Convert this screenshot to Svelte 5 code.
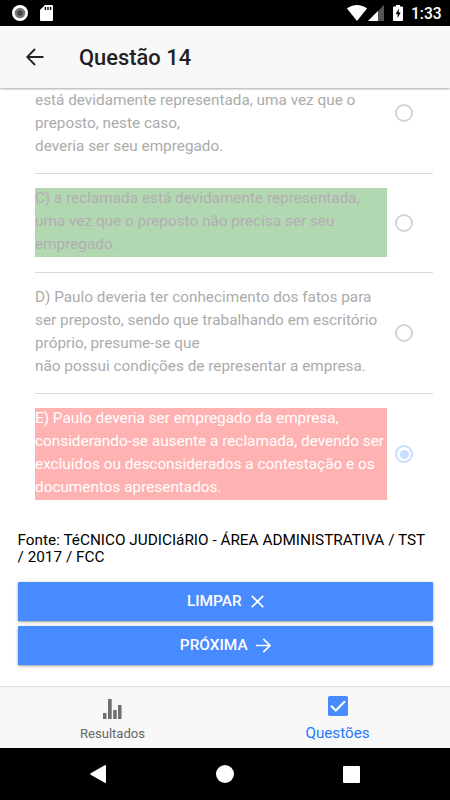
<script lang="ts">
	type Option = {
		text: string;
		state?: 'correct' | 'wrong';
		checked?: boolean;
	};

	const options: Option[] = [
		{
			text: 'está devidamente representada, uma vez que o\npreposto, neste caso,\ndeveria ser seu empregado.'
		},
		{
			text: 'C) a reclamada está devidamente representada,\numa vez que o preposto não precisa ser seu\nempregado.',
			state: 'correct'
		},
		{
			text: 'D) Paulo deveria ter conhecimento dos fatos para\nser preposto, sendo que trabalhando em escritório\npróprio, presume-se que\nnão possui condições de representar a empresa.'
		},
		{
			text: 'E) Paulo deveria ser empregado da empresa,\nconsiderando-se ausente a reclamada, devendo ser\nexcluídos ou desconsiderados a contestação e os\ndocumentos apresentados.',
			state: 'wrong',
			checked: true
		}
	];
</script>

<div class="screen">
	<div class="status">
		<svg class="record" width="16" height="16" viewBox="0 0 16 16">
			<circle cx="8" cy="8" r="8" fill="#fff" />
			<circle cx="8" cy="8" r="5.3" fill="#777" />
			<circle cx="8" cy="8" r="2.7" fill="#444" />
		</svg>
		<svg class="sd" width="13" height="16" viewBox="0 0 13 16">
			<path d="M5 0h7a1 1 0 0 1 1 1v14a1 1 0 0 1-1 1H1a1 1 0 0 1-1-1V5z" fill="#fff" />
			<path d="M4.7 2h1.4v3H4.7zM7.3 2h1.4v3H7.3zM9.900 2h1.4v3H9.900z" fill="#000" />
		</svg>
		<div class="spacer"></div>
		<svg class="wifi" width="20" height="16" viewBox="0 0 20 16">
			<path d="M10 16 0 3.5Q4.4 0 10 0t10 3.5z" fill="#fff" />
		</svg>
		<svg class="signal" width="16" height="16" viewBox="0 0 16 16">
			<path d="M16 0v16H0z" fill="#555" />
			<path d="M10 6v10H0z" fill="#fff" />
		</svg>
		<svg class="battery" width="10" height="16" viewBox="0 0 10 16">
			<path d="M3 0h4v1.5h2a1 1 0 0 1 1 1V15a1 1 0 0 1-1 1H1a1 1 0 0 1-1-1V2.5a1 1 0 0 1 1-1h2z" fill="#fff" />
			<path d="M6 3.500 2.600 9h2v4l3.100-5.500H5.700z" fill="#000" />
		</svg>
		<span class="clock">1:33</span>
	</div>

	<header>
		<svg class="back" width="18" height="18" viewBox="0 0 18 18">
			<path d="M17.5 9H1.5M9 1 1.2 9 9 17" fill="none" stroke="#222" stroke-width="1.8" />
		</svg>
		<h1>Questão 14</h1>
	</header>

	<main>
		<div class="options">
			{#each options as option}
				<div class="option">
					<div class="label {option.state ?? ''}"><p>{option.text}</p></div>
					<div class="radio" class:checked={option.checked}></div>
				</div>
			{/each}
		</div>

		<p class="source">Fonte: TéCNICO JUDICIáRIO - ÁREA ADMINISTRATIVA / TST<br />/ 2017 / FCC</p>

		<button>
			<span>LIMPAR</span>
			<svg class="close" width="13" height="13" viewBox="0 0 13 13">
				<path d="M.8.8l11.4 11.4M12.2.8.8 12.2" fill="none" stroke="#fff" stroke-width="1.7" />
			</svg>
		</button>
		<button>
			<span>PRÓXIMA</span>
			<svg class="next" width="15" height="15" viewBox="0 0 15 15">
				<path d="M0 7.5h14M7.3.8 14 7.5l-6.7 6.7" fill="none" stroke="#fff" stroke-width="1.7" />
			</svg>
		</button>
	</main>

	<nav class="tabs">
		<div class="tab">
			<svg width="19" height="20" viewBox="0 0 19 20">
				<path d="M0 14h3.500v6H0zM5 0h3.700v20H5zM10.200 11h3.500v9h-3.500zM15 6h3.500v14H15z" fill="#6f6f6f" />
			</svg>
			<span>Resultados</span>
		</div>
		<div class="tab active">
			<svg width="20" height="20" viewBox="0 0 20 20">
				<rect width="20" height="20" rx="1.8" fill="#488aff" />
				<path d="M3 9.8l4.8 4.7L17 5.2" fill="none" stroke="#fff" stroke-width="2" />
			</svg>
			<span>Questões</span>
		</div>
	</nav>

	<div class="system">
		<svg width="16" height="18" viewBox="0 0 16 18">
			<path d="M14.7.3Q16-.3 16 1v16q0 1.300-1.300.7L.7 9.700Q-.3 9 .7 8.300z" fill="#fff" />
		</svg>
		<svg width="18" height="18" viewBox="0 0 18 18">
			<circle cx="9" cy="9" r="9" fill="#fff" />
		</svg>
		<svg width="17" height="17" viewBox="0 0 17 17">
			<rect width="17" height="17" rx="1" fill="#fff" />
		</svg>
	</div>
</div>

<style>
	.screen {
		display: flex;
		flex-direction: column;
		width: 450px;
		height: 800px;
		overflow: hidden;
		background: #fff;
		font-family: Roboto, sans-serif;
		font-size: 15.33px;
	}

	svg {
		display: block;
		flex: none;
	}

	.status {
		display: flex;
		align-items: center;
		flex: none;
		box-sizing: border-box;
		height: 26px;
		padding: 0 9px 0 12px;
		background: #000;
	}

	.sd {
		margin-left: 12px;
	}

	.spacer {
		flex: 1;
	}

	.signal {
		margin-left: 1px;
	}

	.battery {
		margin-left: 9px;
	}

	.clock {
		width: 30px;
		margin-left: 8px;
		padding-top: 2px;
		color: #fff;
		font-size: 15.6px;
		font-weight: 500;
	}

	header {
		display: flex;
		align-items: center;
		flex: none;
		z-index: 1;
		height: 62px;
		padding-left: 26px;
		background: #f8f8f8;
		box-shadow: 0 1px 2px rgba(0, 0, 0, 0.35);
	}

	h1 {
		margin: 0 0 0 35px;
		color: #222;
		font-size: 21.9px;
		font-weight: 500;
	}

	main {
		flex: 1;
		min-height: 0;
		padding: 0 17px 0 17.5px;
		overflow: hidden;
	}

	.options {
		margin-top: -35.4px;
		padding-left: 17.5px;
	}

	.option {
		display: flex;
		align-items: center;
		box-sizing: border-box;
		padding: 14.25px 0;
		border-bottom: 1px solid #dadada;
	}

	/* scrolled halfway under the header */
	.option:first-child {
		height: 121.4px;
	}

	.option:first-child .label {
		align-self: flex-end;
	}

	.option:last-child {
		border-bottom: none;
	}

	.label {
		display: flow-root;
		width: 352px;
		color: #ababab;
		line-height: 23px;
		white-space: pre;
	}

	.label p {
		margin: -1px 0 1px;
	}

	.correct {
		background: #b2d8b2;
		color: #b3adb3;
	}

	.wrong {
		background: #ffb2b2;
		color: #fff;
	}

	.radio {
		display: flex;
		align-items: center;
		justify-content: center;
		box-sizing: border-box;
		width: 18px;
		height: 18px;
		margin-left: 8.2px;
		border: 2px solid #d4d4d4;
		border-radius: 50%;
	}

	.checked {
		border-color: #c8dcff;
	}

	.checked::after {
		content: '';
		width: 9px;
		height: 9px;
		background: #c8dcff;
		border-radius: 50%;
	}

	.source {
		margin: 17px 0 15px;
		color: #000;
		line-height: 17.5px;
		white-space: nowrap;
	}

	button {
		display: flex;
		align-items: center;
		justify-content: center;
		width: 100%;
		height: 39px;
		margin: 0 0 5px;
		padding: 0;
		border: none;
		border-radius: 1px;
		background: #488aff;
		box-shadow: 0 1px 3px rgba(0, 0, 0, 0.4);
		color: #fff;
		font: 500 15.4px Roboto, sans-serif;
	}

	.close {
		margin-left: 9px;
	}

	.next {
		margin-left: 8px;
	}

	.tabs {
		display: flex;
		flex: none;
		box-sizing: border-box;
		height: 62.5px;
		border-top: 1px solid #e0e0e0;
		background: #f8f8f8;
	}

	.tab {
		display: flex;
		flex: 1;
		flex-direction: column;
		align-items: center;
		padding-top: 12.5px;
		color: #666;
		font-size: 13.1px;
		line-height: 16px;
	}

	.tab span {
		margin-top: 7px;
	}

	.active {
		padding-top: 9.5px;
		color: #1f79ff;
		font-size: 15.2px;
	}

	.active span {
		margin-top: 9px;
	}

	.system {
		display: flex;
		align-items: center;
		flex: none;
		justify-content: space-between;
		box-sizing: border-box;
		height: 52px;
		padding: 0 90px;
		background: #000;
	}
</style>
